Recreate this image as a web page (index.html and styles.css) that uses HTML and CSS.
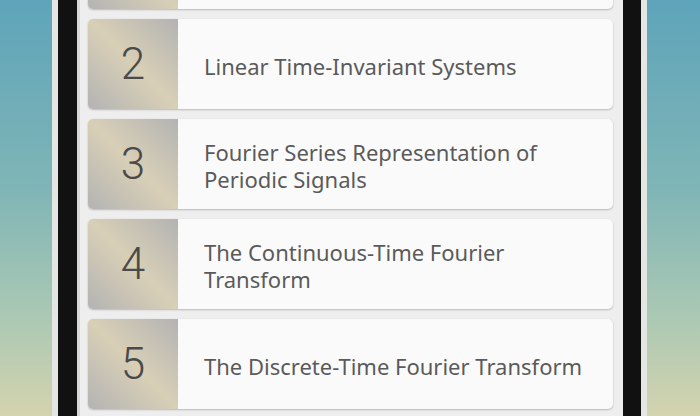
FILE: index.html
```html
<!DOCTYPE html>
<html lang="en">
<head>
    <meta charset="UTF-8">
    <meta name="viewport" content="width=device-width, initial-scale=1.0">
    <title>Signals and Systems - Chapters</title>
    <link rel="stylesheet" href="styles.css">
</head>
<body>
    <div class="phone">
        <div class="bezel">
            <div class="screen">
                <ul class="chapters">
                    <li class="chapter first">
                        <div class="num">1</div>
                        <div class="title">Signals and Systems</div>
                    </li>
                    <li class="chapter">
                        <div class="num">2</div>
                        <div class="title">Linear Time-Invariant Systems</div>
                    </li>
                    <li class="chapter">
                        <div class="num">3</div>
                        <div class="title">Fourier Series Representation of Periodic Signals</div>
                    </li>
                    <li class="chapter">
                        <div class="num">4</div>
                        <div class="title">The Continuous-Time Fourier Transform</div>
                    </li>
                    <li class="chapter">
                        <div class="num">5</div>
                        <div class="title">The Discrete-Time Fourier Transform</div>
                    </li>
                    <li class="chapter">
                        <div class="num">6</div>
                        <div class="title">Time and Frequency Characterization of Signals and Systems</div>
                    </li>
                </ul>
            </div>
        </div>
    </div>
</body>
</html>
```

FILE: styles.css
```css
:root {
    --text: #5a5a5a;
    --card: #fafafa;
    --screen: #eeeeee;
    --bezel: #111111;
}

html, body {
    height: 100%;
}

body {
    margin: 0;
    overflow: hidden;
    background: linear-gradient(180deg, #5ea4ba 0%, #7fb5b6 45%, #a9c8b4 75%, #d4d3ae 100%);
    font-family: 'Noto Sans', 'Open Sans', sans-serif;
    color: var(--text);
}

.phone {
    width: 595px;
    height: 100%;
    margin-left: 52px;
    padding: 0 6px;
    box-sizing: border-box;
    background: #e4e6e4;
}

.bezel {
    height: 100%;
    padding: 0 18px 0 19px;
    background: var(--bezel);
}

.screen {
    height: 100%;
    overflow: hidden;
    background: var(--screen);
    border-left: 3px solid #d8d8d8;
    padding: 0 10px 0 8px;
}

.chapters {
    list-style: none;
    margin: -81px 0 0;
    padding: 0;
    display: flex;
    flex-direction: column;
    gap: 10px;
}

.chapter {
    display: flex;
    align-items: center;
    height: 90px;
    background: var(--card);
    border-radius: 5px;
    overflow: hidden;
    box-shadow: 0 1px 2px rgba(0,0,0,0.22), 0 0 1px rgba(0,0,0,0.08);
}

.num {
    flex: 0 0 90px;
    height: 90px;
    display: flex;
    align-items: center;
    justify-content: center;
    background: linear-gradient(45deg, #b3b3b3 0%, #d8cfb6 50%, #b3b3b3 100%);
    font-family: Roboto, 'Noto Sans', sans-serif;
    font-weight: 300;
    font-size: 44px;
    color: #4a4a4a;
}

.title {
    padding: 4px 18px 0 26px;
    font-size: 22px;
    line-height: 27px;
}
```
